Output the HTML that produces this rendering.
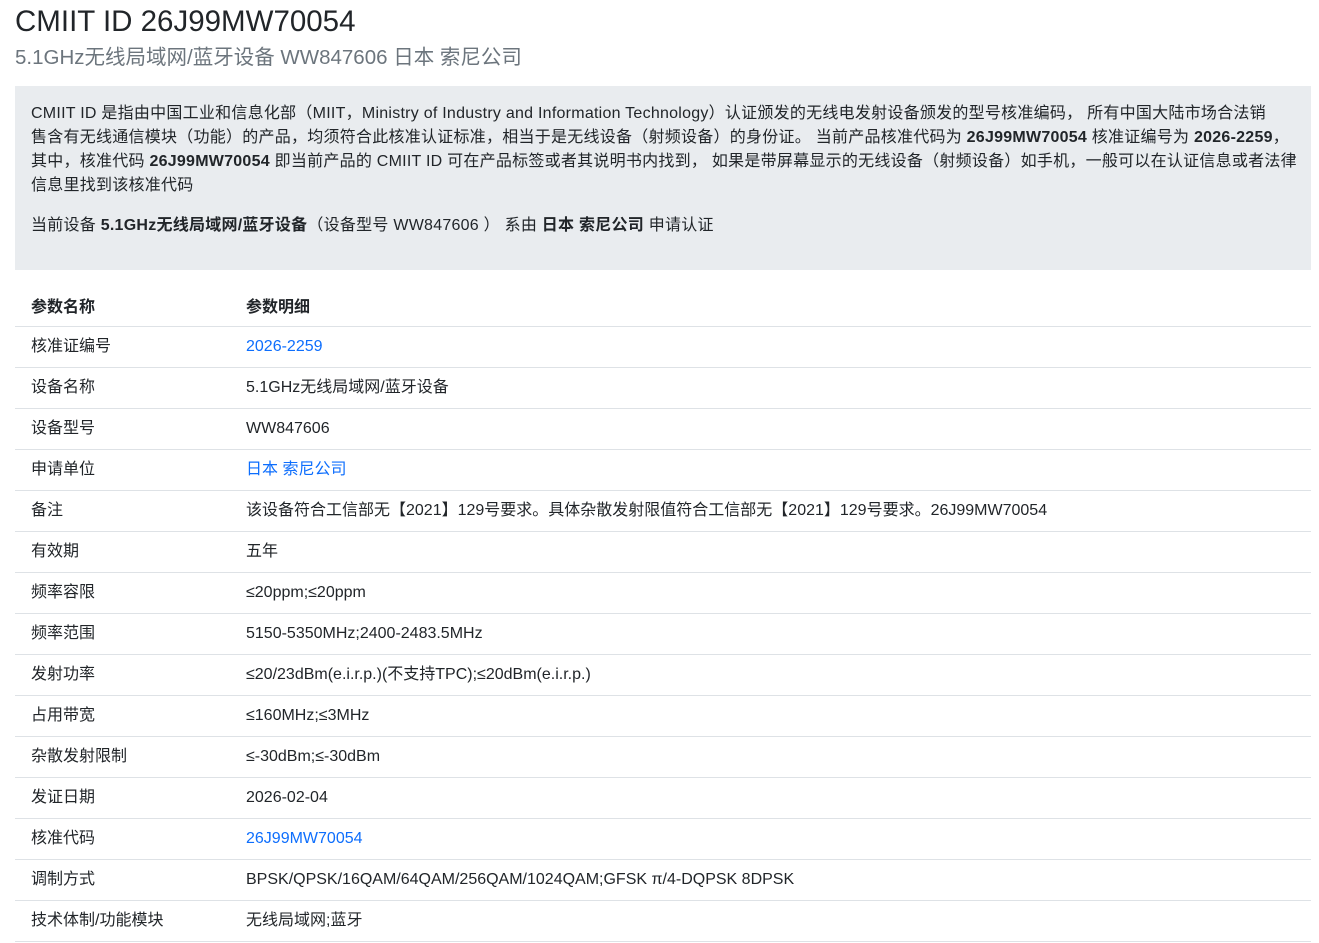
<!DOCTYPE html>
<html><head><meta charset="utf-8">
<style>
*{box-sizing:border-box;margin:0;padding:0}
body{width:1319px;height:943px;overflow:hidden;background:#fff;color:#212529;font-family:"Liberation Sans","Noto Sans CJK SC",sans-serif;font-size:16px;line-height:24px}
.wrap{padding:0 15px 0 15px;width:1326px}
h1{font-size:29.5px;font-weight:400;line-height:44px;height:42px;margin:0}
h2{font-size:20.5px;font-weight:400;color:#6c757d;line-height:28px;margin-top:2px;height:42px}
.box{background:#e9ecef;width:1296px;height:184px;padding:16px 16px;font-size:16px;letter-spacing:0.25px;color:#212529}
.box p{margin-bottom:16px}
.box span.l{display:block;white-space:nowrap}
table{width:1296px;border-collapse:collapse;margin-top:16px}
td,th{height:41px;padding:0 16px;border-bottom:1px solid #dee2e6;text-align:left;vertical-align:middle;white-space:nowrap}
th{font-weight:700;height:40px;padding-top:4px}
td:first-child,th:first-child{width:215px}
a{color:#0d6efd;text-decoration:none}
</style></head><body><div class="wrap">
<h1>CMIIT ID 26J99MW70054</h1>
<h2>5.1GHz无线局域网/蓝牙设备 WW847606 日本 索尼公司</h2>
<div class="box">
<p><span class="l">CMIIT ID 是指由中国工业和信息化部（MIIT，Ministry of Industry and Information Technology）认证颁发的无线电发射设备颁发的型号核准编码， 所有中国大陆市场合法销</span><span class="l">售含有无线通信模块（功能）的产品，均须符合此核准认证标准，相当于是无线设备（射频设备）的身份证。 当前产品核准代码为 <b>26J99MW70054</b> 核准证编号为 <b>2026-2259</b>，</span><span class="l">其中，核准代码 <b>26J99MW70054</b> 即当前产品的 CMIIT ID 可在产品标签或者其说明书内找到， 如果是带屏幕显示的无线设备（射频设备）如手机，一般可以在认证信息或者法律</span><span class="l">信息里找到该核准代码</span></p>
<p>当前设备 <b>5.1GHz无线局域网/蓝牙设备</b>（设备型号 WW847606 ） 系由 <b>日本 索尼公司</b> 申请认证</p>
</div>
<table>
<tr><th>参数名称</th><th>参数明细</th></tr>
<tr><td>核准证编号</td><td><a>2026-2259</a></td></tr>
<tr><td>设备名称</td><td>5.1GHz无线局域网/蓝牙设备</td></tr>
<tr><td>设备型号</td><td>WW847606</td></tr>
<tr><td>申请单位</td><td><a>日本 索尼公司</a></td></tr>
<tr><td>备注</td><td>该设备符合工信部无【2021】129号要求。具体杂散发射限值符合工信部无【2021】129号要求。26J99MW70054</td></tr>
<tr><td>有效期</td><td>五年</td></tr>
<tr><td>频率容限</td><td>≤20ppm;≤20ppm</td></tr>
<tr><td>频率范围</td><td>5150-5350MHz;2400-2483.5MHz</td></tr>
<tr><td>发射功率</td><td>≤20/23dBm(e.i.r.p.)(不支持TPC);≤20dBm(e.i.r.p.)</td></tr>
<tr><td>占用带宽</td><td>≤160MHz;≤3MHz</td></tr>
<tr><td>杂散发射限制</td><td>≤-30dBm;≤-30dBm</td></tr>
<tr><td>发证日期</td><td>2026-02-04</td></tr>
<tr><td>核准代码</td><td><a>26J99MW70054</a></td></tr>
<tr><td>调制方式</td><td>BPSK/QPSK/16QAM/64QAM/256QAM/1024QAM;GFSK π/4-DQPSK 8DPSK</td></tr>
<tr><td>技术体制/功能模块</td><td>无线局域网;蓝牙</td></tr>
</table>
</div></body></html>
